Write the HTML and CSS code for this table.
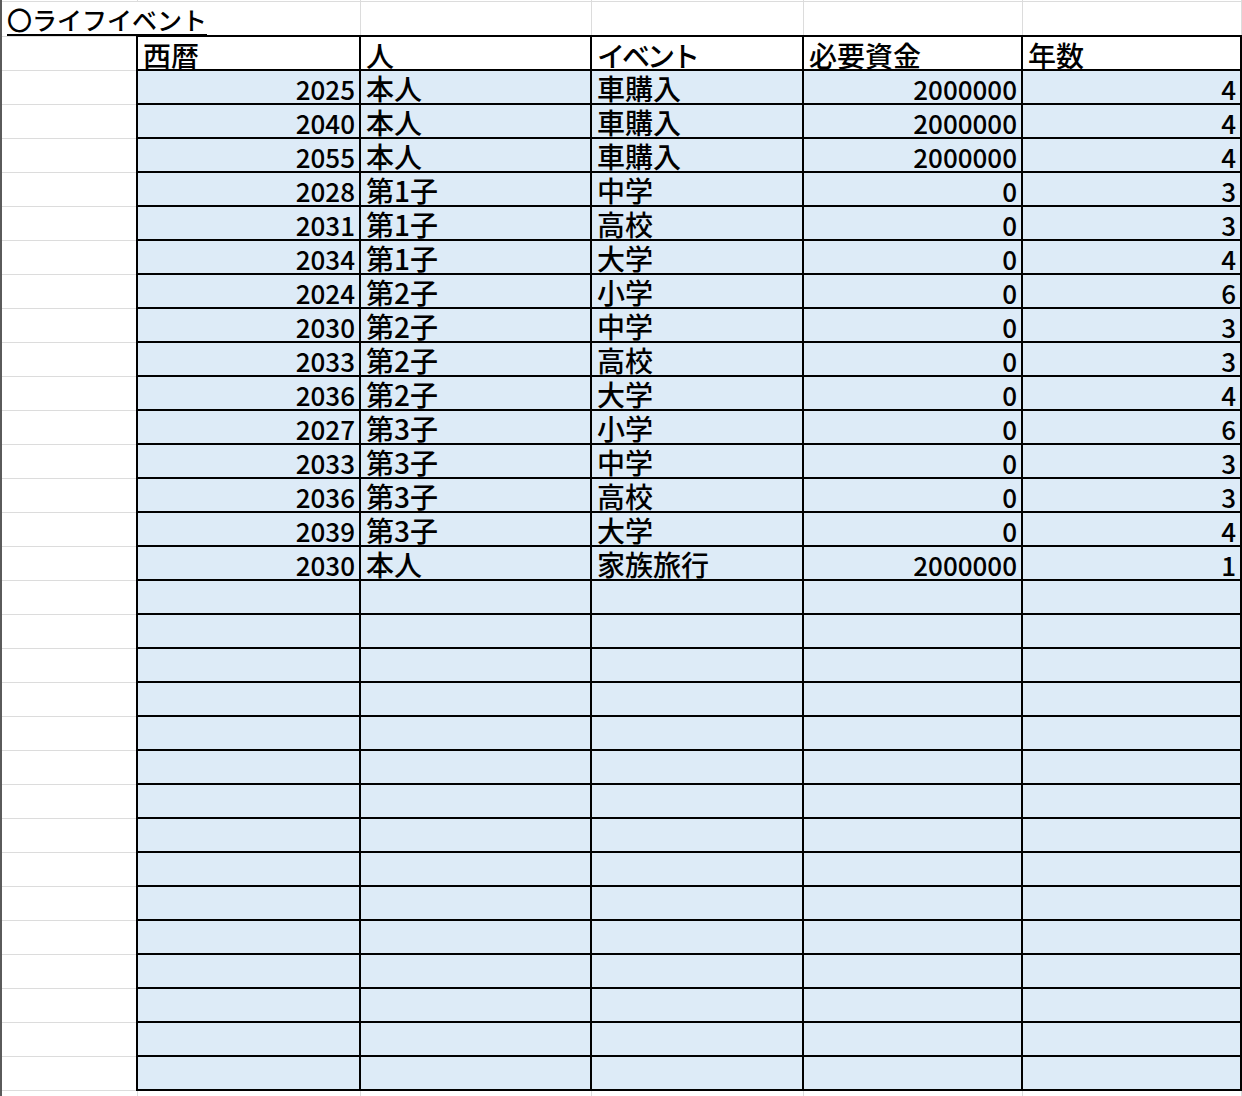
FILE: index.html
```html
<!DOCTYPE html>
<html lang="ja">
<head>
<meta charset="utf-8">
<title>ライフイベント</title>
<link rel="stylesheet" href="styles.css">
</head>
<body>
<table class="sheet">
<colgroup>
<col class="c-a"><col class="c-b"><col class="c-c"><col class="c-d"><col class="c-e"><col class="c-f">
</colgroup>
<tr class="r-top"><td></td><td></td><td></td><td></td><td></td><td></td></tr>
<tr class="r-title"><td colspan="2" class="title"><span>〇ライフイベント</span></td><td></td><td></td><td></td><td></td></tr>
<tr class="r-head"><td></td><th>西暦</th><th>人</th><th class="kana">イベント</th><th>必要資金</th><th>年数</th></tr>
<tr><td></td><td class="n">2025</td><td class="t">本人</td><td class="t">車購入</td><td class="n">2000000</td><td class="n">4</td></tr>
<tr><td></td><td class="n">2040</td><td class="t">本人</td><td class="t">車購入</td><td class="n">2000000</td><td class="n">4</td></tr>
<tr><td></td><td class="n">2055</td><td class="t">本人</td><td class="t">車購入</td><td class="n">2000000</td><td class="n">4</td></tr>
<tr><td></td><td class="n">2028</td><td class="t">第1子</td><td class="t">中学</td><td class="n">0</td><td class="n">3</td></tr>
<tr><td></td><td class="n">2031</td><td class="t">第1子</td><td class="t">高校</td><td class="n">0</td><td class="n">3</td></tr>
<tr><td></td><td class="n">2034</td><td class="t">第1子</td><td class="t">大学</td><td class="n">0</td><td class="n">4</td></tr>
<tr><td></td><td class="n">2024</td><td class="t">第2子</td><td class="t">小学</td><td class="n">0</td><td class="n">6</td></tr>
<tr><td></td><td class="n">2030</td><td class="t">第2子</td><td class="t">中学</td><td class="n">0</td><td class="n">3</td></tr>
<tr><td></td><td class="n">2033</td><td class="t">第2子</td><td class="t">高校</td><td class="n">0</td><td class="n">3</td></tr>
<tr><td></td><td class="n">2036</td><td class="t">第2子</td><td class="t">大学</td><td class="n">0</td><td class="n">4</td></tr>
<tr><td></td><td class="n">2027</td><td class="t">第3子</td><td class="t">小学</td><td class="n">0</td><td class="n">6</td></tr>
<tr><td></td><td class="n">2033</td><td class="t">第3子</td><td class="t">中学</td><td class="n">0</td><td class="n">3</td></tr>
<tr><td></td><td class="n">2036</td><td class="t">第3子</td><td class="t">高校</td><td class="n">0</td><td class="n">3</td></tr>
<tr><td></td><td class="n">2039</td><td class="t">第3子</td><td class="t">大学</td><td class="n">0</td><td class="n">4</td></tr>
<tr><td></td><td class="n">2030</td><td class="t">本人</td><td class="t">家族旅行</td><td class="n">2000000</td><td class="n">1</td></tr>
<tr><td></td><td class="f"></td><td class="f"></td><td class="f"></td><td class="f"></td><td class="f"></td></tr>
<tr><td></td><td class="f"></td><td class="f"></td><td class="f"></td><td class="f"></td><td class="f"></td></tr>
<tr><td></td><td class="f"></td><td class="f"></td><td class="f"></td><td class="f"></td><td class="f"></td></tr>
<tr><td></td><td class="f"></td><td class="f"></td><td class="f"></td><td class="f"></td><td class="f"></td></tr>
<tr><td></td><td class="f"></td><td class="f"></td><td class="f"></td><td class="f"></td><td class="f"></td></tr>
<tr><td></td><td class="f"></td><td class="f"></td><td class="f"></td><td class="f"></td><td class="f"></td></tr>
<tr><td></td><td class="f"></td><td class="f"></td><td class="f"></td><td class="f"></td><td class="f"></td></tr>
<tr><td></td><td class="f"></td><td class="f"></td><td class="f"></td><td class="f"></td><td class="f"></td></tr>
<tr><td></td><td class="f"></td><td class="f"></td><td class="f"></td><td class="f"></td><td class="f"></td></tr>
<tr><td></td><td class="f"></td><td class="f"></td><td class="f"></td><td class="f"></td><td class="f"></td></tr>
<tr><td></td><td class="f"></td><td class="f"></td><td class="f"></td><td class="f"></td><td class="f"></td></tr>
<tr><td></td><td class="f"></td><td class="f"></td><td class="f"></td><td class="f"></td><td class="f"></td></tr>
<tr><td></td><td class="f"></td><td class="f"></td><td class="f"></td><td class="f"></td><td class="f"></td></tr>
<tr><td></td><td class="f"></td><td class="f"></td><td class="f"></td><td class="f"></td><td class="f"></td></tr>
<tr><td></td><td class="f"></td><td class="f"></td><td class="f"></td><td class="f"></td><td class="f"></td></tr>
<tr class="r-tail"><td></td><td></td><td></td><td></td><td></td><td></td></tr>
</table>
</body>
</html>
```

FILE: styles.css
```css
html, body {
  margin: 0;
  padding: 0;
  background: #ffffff;
}

body {
  overflow: hidden;
  font-family: "Noto Sans CJK JP", sans-serif;
  font-weight: 500;
  color: #000000;
}

.sheet {
  border-collapse: collapse;
  table-layout: fixed;
  width: 1240px;
  margin-left: 0;
}

.c-a { width: 136px; }
.c-b { width: 223px; }
.c-c { width: 231px; }
.c-d { width: 212px; }
.c-e { width: 219px; }
.c-f { width: 219px; }

.sheet td,
.sheet th {
  padding: 0;
  border: 1px solid #dcdcdc;
  height: 32px;
  vertical-align: bottom;
  overflow: visible;
  white-space: nowrap;
}

.sheet tr > :first-child {
  border-left: 2px solid #5a5a5a;
}

.sheet .r-top td {
  height: 1px;
  border-top: none;
}

.sheet .r-title td {
  height: 33px;
}

.sheet .r-title .title {
  font-size: 25px;
  line-height: 25px;
  padding: 0 0 3px 5px;
  height: 30px;
}

.title span {
  text-decoration: underline;
  text-decoration-thickness: 2px;
  text-underline-offset: 4px;
  text-decoration-skip-ink: none;
}

.sheet th {
  font-weight: 500;
  text-align: left;
  font-size: 28px;
  line-height: 26px;
  height: 31px;
  padding: 0 0 1px 5px;
  background: #ffffff;
  border: 2px solid #000000;
}

.sheet th.kana {
  letter-spacing: -3px;
}

.sheet .n,
.sheet .t,
.sheet .f {
  background: #ddebf7;
  border: 2px solid #000000;
}

.sheet .n {
  text-align: right;
  font-size: 26px;
  line-height: 24px;
  height: 30px;
  padding: 0 4px 2px 0;
}

.sheet .t {
  text-align: left;
  font-size: 28px;
  line-height: 26px;
  height: 30px;
  padding: 0 0 2px 5px;
}

.sheet .r-tail td {
  height: 8px;
  border-bottom: none;
}
```
